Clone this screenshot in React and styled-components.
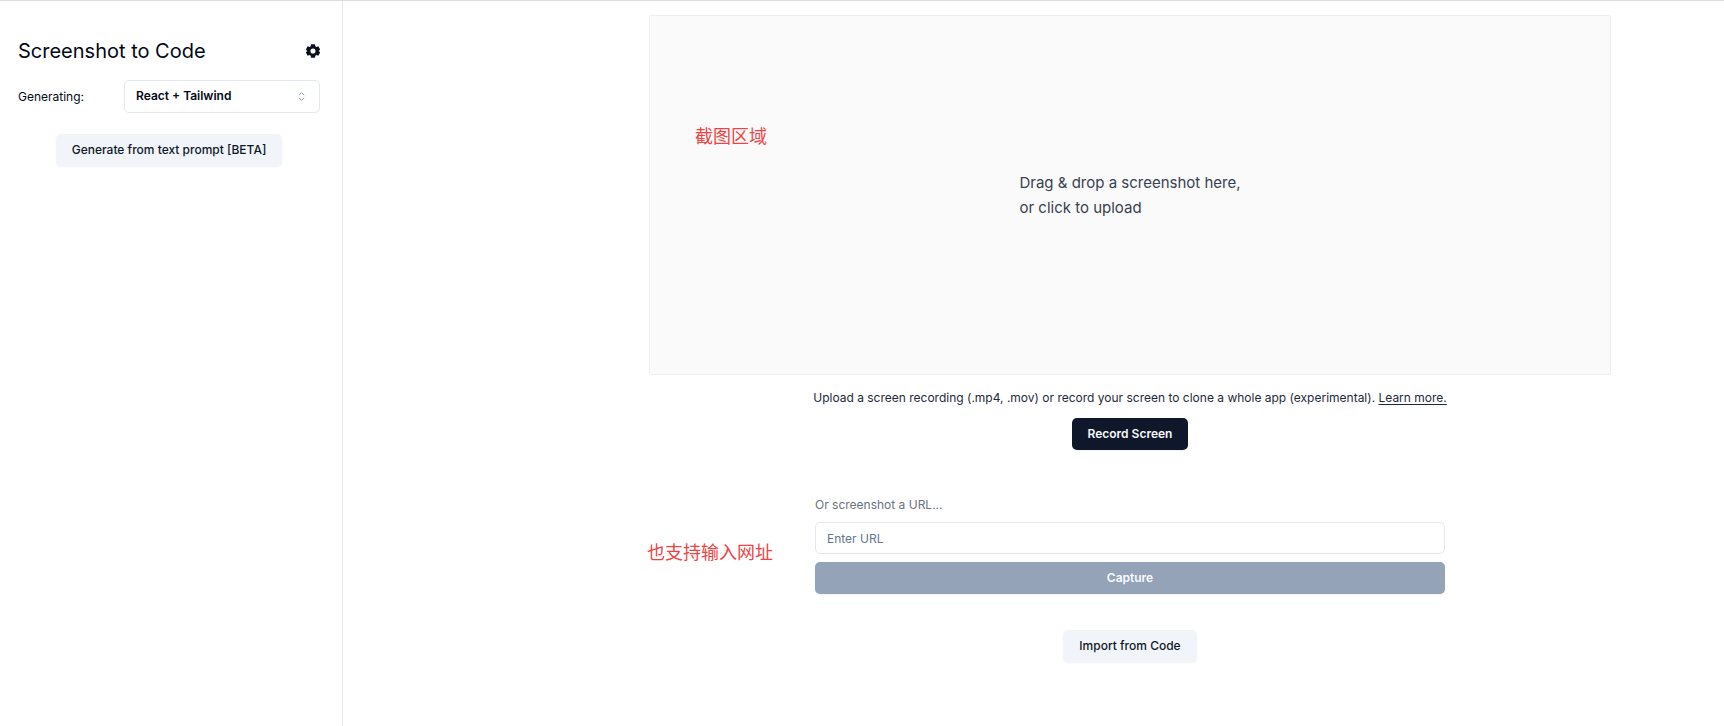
import React, { useState } from 'react';
import styled, { createGlobalStyle } from 'styled-components';

const GlobalStyle = createGlobalStyle`
  *, *::before, *::after {
    box-sizing: border-box;
  }

  body {
    margin: 0;
    background: #fff;
    color: #020817;
    font-family: Inter, 'Noto Sans CJK SC', sans-serif;
    font-size: 12px;
    line-height: 18px;
  }

  button, input, select {
    font: inherit;
    color: inherit;
  }
`;

// Layout
const Page = styled.div`
  display: flex;
  min-height: 100vh;
  border-top: 1px solid #dcdcdc;
`;

const Sidebar = styled.aside`
  display: flex;
  flex-direction: column;
  flex: 0 0 343px;
  padding: 36px 22px 0 18px;
  border-right: 1px solid #e5e7eb;
`;

const Main = styled.main`
  display: flex;
  flex: 1;
  flex-direction: column;
  align-items: center;
  padding: 14px 113px 48px 306px;
`;

// Sidebar parts
const SidebarHeader = styled.div`
  display: flex;
  align-items: center;
  justify-content: space-between;
`;

const Title = styled.h1`
  margin: 0;
  font-size: 20px;
  font-weight: 400;
  line-height: 28px;
`;

const IconButton = styled.button`
  display: flex;
  padding: 0;
  border: none;
  background: none;
  cursor: pointer;
`;

const Field = styled.div`
  display: flex;
  align-items: center;
  justify-content: space-between;
  margin-top: 15px;
`;

const SelectWrapper = styled.div`
  display: grid;
  align-items: center;
  width: 196px;

  > * {
    grid-area: 1 / 1;
  }

  > svg {
    justify-self: end;
    margin-right: 12px;
    pointer-events: none;
  }
`;

const Select = styled.select`
  appearance: none;
  width: 100%;
  height: 33px;
  padding: 0 32px 1px 11px;
  border: 1px solid #e2e8f0;
  border-radius: 5px;
  background: #fff;
  font-weight: 600;
`;

const Button = styled.button`
  height: 32px;
  padding: 0 16px 1px;
  border: none;
  border-radius: 5px;
  background: ${props => (props.$secondary ? '#f1f5f9' : '#0f172a')};
  color: ${props => (props.$secondary ? '#0f172a' : '#f8fafc')};
  font-weight: ${props => (props.$secondary ? 500 : 600)};
  box-shadow: 0 1px 2px rgba(0, 0, 0, 0.06);
  cursor: pointer;

  &:disabled {
    background: #94a3b8;
    cursor: default;
  }
`;

const PromptRow = styled.div`
  display: flex;
  justify-content: center;
  margin-top: 21px;
`;

// Main parts
const DropZone = styled.button`
  position: relative;
  display: flex;
  align-items: center;
  justify-content: center;
  width: 100%;
  height: 360px;
  padding: 0;
  border: 1px solid #eee;
  border-radius: 2px;
  background: #fafafa;
  color: #374151;
  font-size: 15px;
  line-height: 25px;
  text-align: left;
  cursor: pointer;
`;

const Note = styled.span`
  position: absolute;
  top: ${props => props.$top};
  left: ${props => props.$left};
  color: #ef4444;
  font-family: 'Noto Sans CJK SC', sans-serif;
  font-size: 18px;
  line-height: 24px;
  white-space: nowrap;
`;

const Hint = styled.p`
  margin: 14px 0 11px;
  color: #1e293b;
`;

const Link = styled.a`
  color: inherit;
  text-underline-offset: 2px;
`;

const UrlForm = styled.form`
  position: relative;
  display: flex;
  flex-direction: column;
  width: 100%;
  max-width: 630px;
  margin: 46px 0 36px;
  gap: 8px;
`;

const Label = styled.label`
  color: #6b7280;
`;

const Input = styled.input`
  height: 32px;
  padding: 0 11px;
  border: 1px solid #e2e8f0;
  border-radius: 5px;
  background: #fff;

  &::placeholder {
    color: #64748b;
    opacity: 1;
  }
`;

function GearIcon() {
  return (
    <svg width="14" height="14" viewBox="1 1 22 22" fill="#0b1020" aria-hidden="true">
      <path
        fillRule="evenodd"
        d="M9 1.5h6l.7 3.2 1.6.9 3.1-1 3 5.2-2.4 2.2 2.4 2.2-3 5.2-3.1-1-1.6.9-.7 3.2H9l-.7-3.2-1.6-.9-3.1 1-3-5.2L3 12 .6 9.8l3-5.2 3.1 1 1.6-.9zM12 8a4 4 0 1 0 0 8 4 4 0 0 0 0-8z"
      />
    </svg>
  );
}

function CaretSortIcon() {
  return (
    <svg width="13" height="13" viewBox="0 0 15 15" fill="none" stroke="#808590" aria-hidden="true">
      <path d="M4.8 5.7 7.5 3l2.7 2.7M4.8 9.3 7.5 12l2.7-2.7" strokeLinecap="round" strokeLinejoin="round" />
    </svg>
  );
}

export default function App() {
  const [stack, setStack] = useState('react_tailwind');
  const [url, setUrl] = useState('');

  return (
    <>
      <GlobalStyle />
      <Page>
        <Sidebar>
          <SidebarHeader>
            <Title>Screenshot to Code</Title>
            <IconButton aria-label="Settings">
              <GearIcon />
            </IconButton>
          </SidebarHeader>
          <Field>
            <label htmlFor="stack">Generating:</label>
            <SelectWrapper>
              <Select id="stack" value={stack} onChange={e => setStack(e.target.value)}>
                <option value="react_tailwind">React + Tailwind</option>
              </Select>
              <CaretSortIcon />
            </SelectWrapper>
          </Field>
          <PromptRow>
            <Button $secondary>Generate from text prompt [BETA]</Button>
          </PromptRow>
        </Sidebar>
        <Main>
          <DropZone>
            <Note $top="107px" $left="45px">截图区域</Note>
            <span>
              Drag &amp; drop a screenshot here,
              <br />
              or click to upload
            </span>
          </DropZone>
          <Hint>
            Upload a screen recording (.mp4, .mov) or record your screen to clone a whole app
            (experimental). <Link href="#learn-more">Learn more.</Link>
          </Hint>
          <Button>Record Screen</Button>
          <UrlForm onSubmit={e => e.preventDefault()}>
            <Note $top="43px" $left="-168px">也支持输入网址</Note>
            <Label htmlFor="url">Or screenshot a URL...</Label>
            <Input
              id="url"
              placeholder="Enter URL"
              value={url}
              onChange={e => setUrl(e.target.value)}
            />
            <Button type="submit" disabled={!url}>Capture</Button>
          </UrlForm>
          <Button $secondary>Import from Code</Button>
        </Main>
      </Page>
    </>
  );
}
